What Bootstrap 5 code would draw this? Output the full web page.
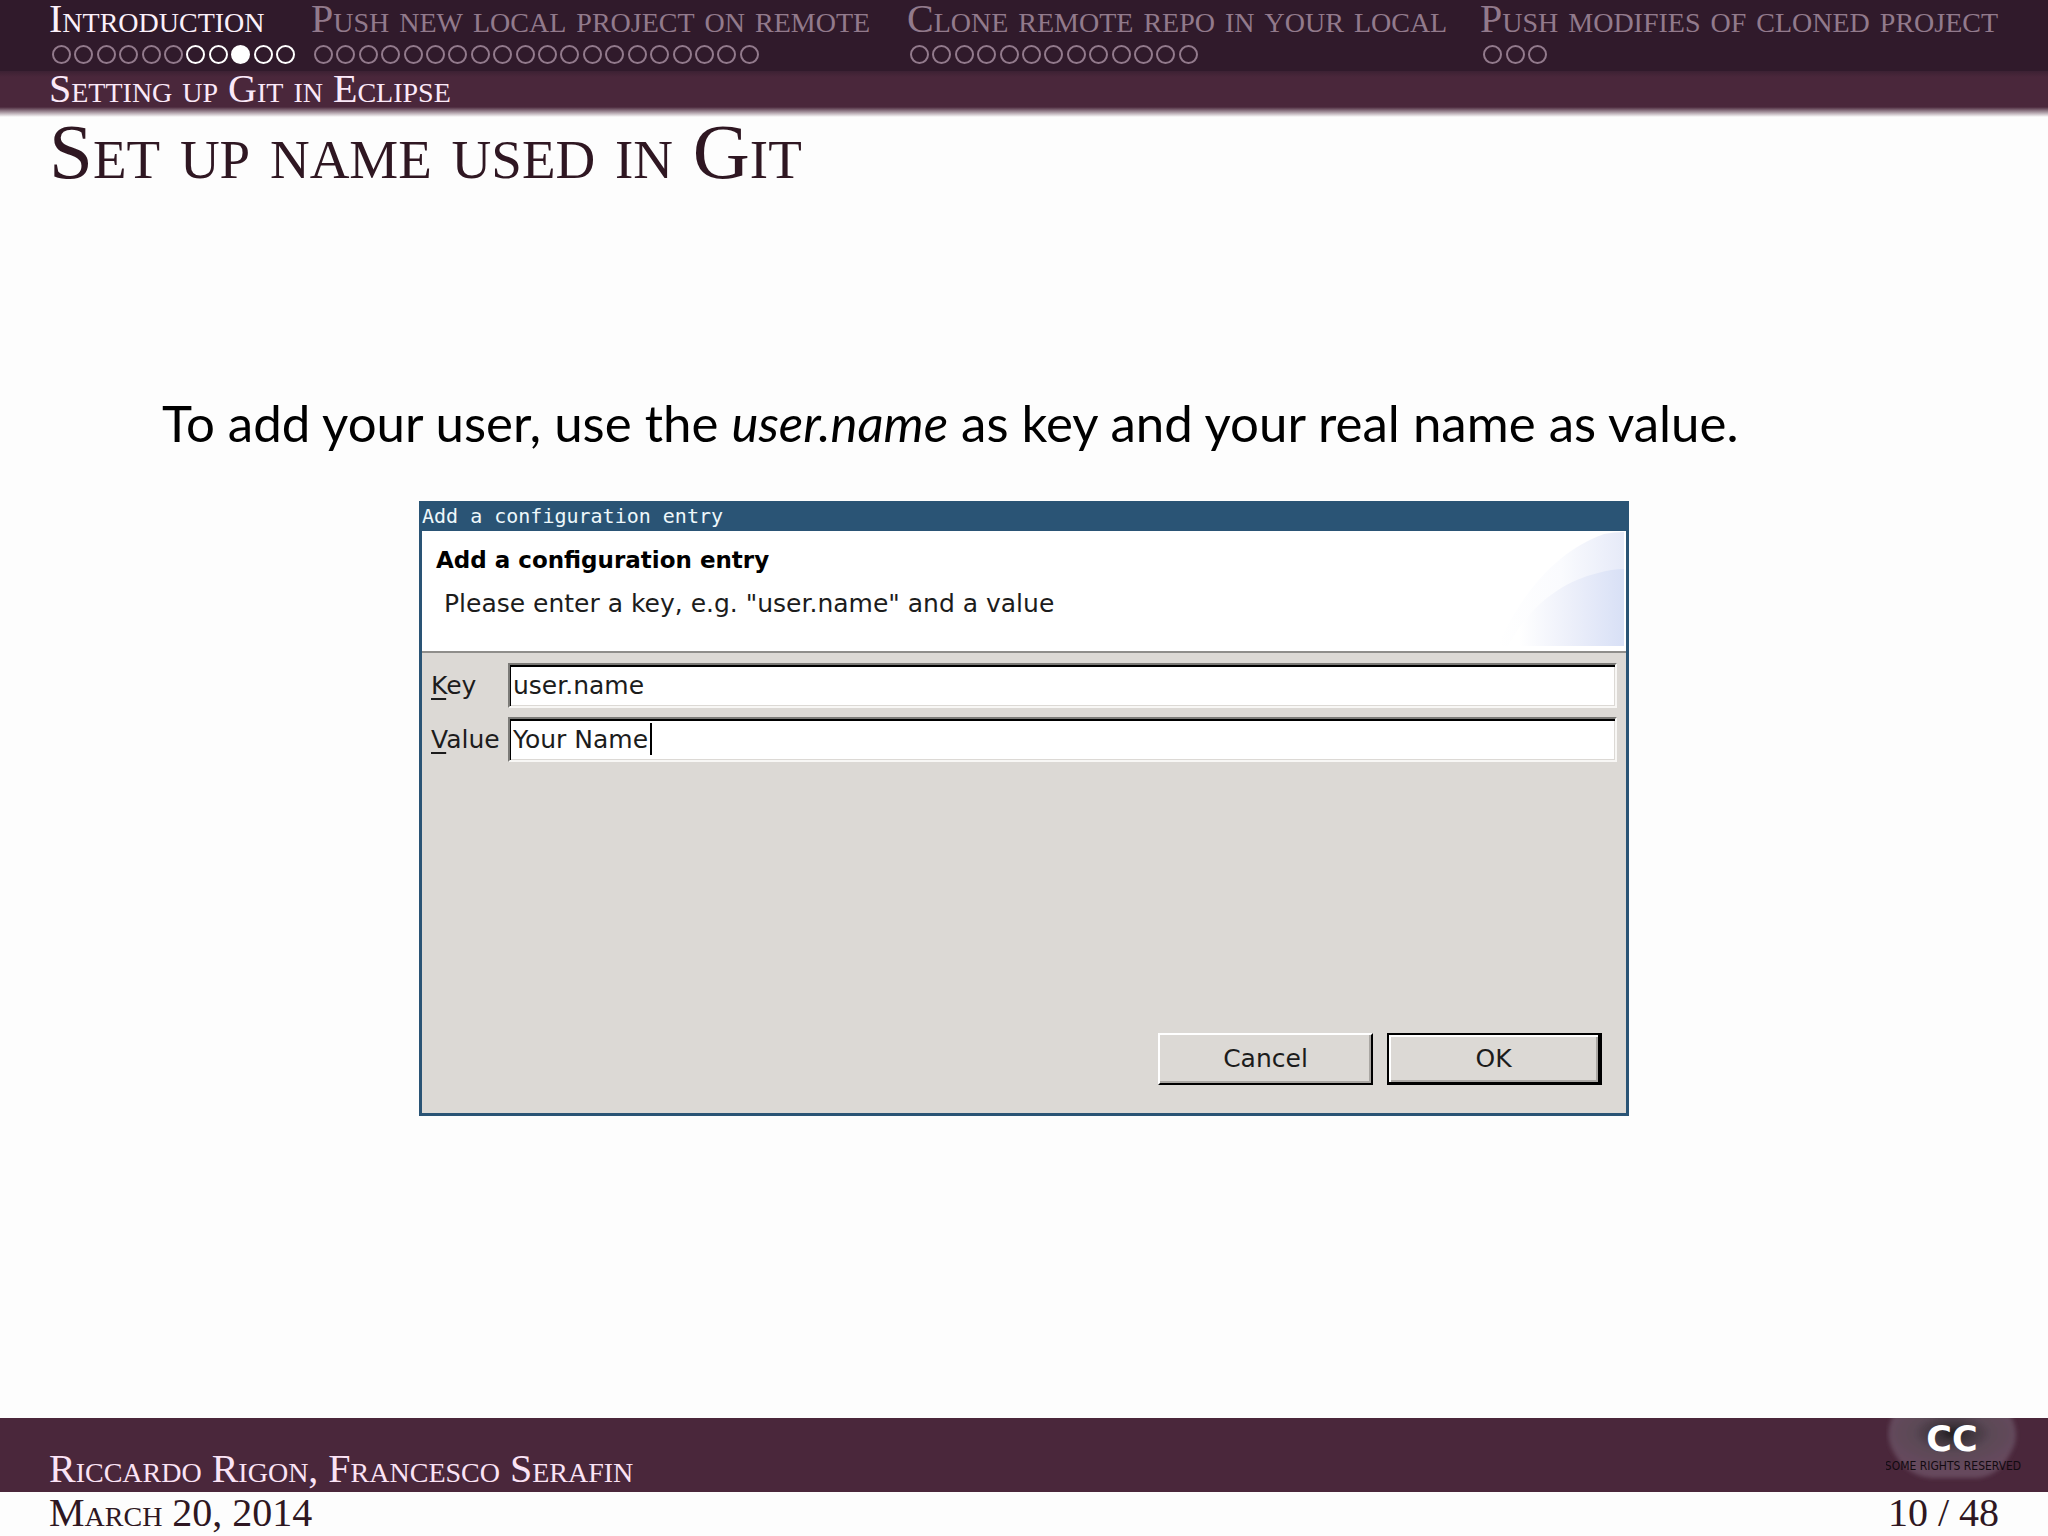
<!DOCTYPE html>
<html lang="en">
<head>
<meta charset="utf-8">
<meta name="viewport" content="width=device-width, initial-scale=1">
<title>Set up name used in Git</title>
<link href="https://cdn.jsdelivr.net/npm/bootstrap@5.3.0/dist/css/bootstrap.min.css" rel="stylesheet">
<style>
  body { background: #fdfdfd; color: #000; }
  .sc { font-family: "Liberation Serif", serif; font-variant: small-caps; font-size: 40px; line-height: 36px; white-space: nowrap; }
  .edge { padding-left: 49px; padding-right: 49px; }

  /* navigation header */
  .sections { background: #301a2b; height: 71px; line-height: 38px; display: grid; grid-template-columns: 262fr 596fr 573fr 519fr; }
  .sections a { color: #927a8c; text-decoration: none; }
  .sections a.current { color: #fbf0fa; }
  .dots { margin: 7px 0 0 3px; height: 19px; }
  .dots a { display: block; width: 19px; height: 19px; border: 2px solid #927a8c; border-radius: 50%; }
  .dots a.near { border-color: #fff; }
  .dots a.here { border-color: #fff; background: #fff; }
  .subsection { background: linear-gradient(#3c2133, #4a273b 6px); color: #fbe9f8; }
  .fade-edge { height: 10px; background: linear-gradient(#4a273b, #fdfdfd); }
  .frame-title { font-size: 79px; line-height: 70px; color: #2f1722; font-weight: 400; }

  /* slide body */
  .slide-body { padding-top: 206px; }
  .lead-line { font-family: Lato, sans-serif; font-size: 51px; line-height: 60px; padding-left: 162px; margin-bottom: 48px; }

  /* dialog */
  .dialog { width: 100%; max-width: 1210px; background: #dcd9d5; border: 3px solid #2a5475; border-top: 0; font-family: "DejaVu Sans", sans-serif; font-size: 25px; color: #1c1c1c; }
  .dialog-bar { background: #2a5475; color: #eef8fb; font-family: "DejaVu Sans Mono", monospace; font-size: 20px; line-height: 30px; }
  .dialog-head { background: #fff; padding: 14px 14px 30px; border-bottom: 2px solid #8f8e8b; }
  .dialog-head h2 { font-size: 23px; line-height: 30px; font-weight: 700; margin: 0 0 12px; color: #000; }
  .dialog-head p { line-height: 34px; margin: 0 8px; }
  .swoosh { position: absolute; right: 2px; top: 1px; width: 126px; height: 114px; }
  .fields { padding: 10px 9px 0; gap: 9px; margin-bottom: 271px; }
  .fields label { width: 77px; text-underline-offset: 4px; }
  .fields input { width: 100%; height: 45px; padding: 0 3px; border: 2px solid; border-color: #7b7a77 #f8f7f5 #f8f7f5 #7b7a77; border-radius: 0; background: #fff; color: #1c1c1c; box-shadow: inset 1px 2px #000, inset -1px -1px #dcd9d5; outline: 0; }
  .text-caret { position: absolute; left: 142px; top: 6px; width: 2px; height: 32px; background: #000; }
  .actions { gap: 14px; padding: 0 24px 28px; }
  .actions button { width: 215px; height: 52px; background: #dcd9d5; color: #1c1c1c; border: 2px solid; border-color: #fff #000 #000 #fff; box-shadow: inset -2px -2px #aaa7a3; padding: 0; }
  .actions button.default { border-color: #000; border-right-width: 4px; border-bottom-width: 3px; box-shadow: inset 2px 2px #fff, inset -2px -2px #aaa7a3; }

  /* footer */
  .authors { background: #4a273b; color: #fbe3f5; height: 74px; padding-top: 33px; }
  .dateline { color: #2f1722; line-height: 42px; padding-bottom: 2px; }
  .cc-mark { position: absolute; right: 26px; top: 0; width: 136px; height: 74px; }
</style>
<script src="https://cdn.jsdelivr.net/npm/bootstrap@5.3.0/dist/js/bootstrap.bundle.min.js"></script>
</head>
<body>
<div class="d-flex flex-column min-vh-100">
  <header>
    <nav class="sections sc edge" aria-label="Sections">
      <div><a class="current" href="#">Introduction</a><div class="dots d-flex justify-content-between" data-count="11" data-near="6" data-here="8"></div></div>
      <div><a href="#">Push new local project on remote</a><div class="dots d-flex justify-content-between" data-count="20"></div></div>
      <div><a href="#">Clone remote repo in your local</a><div class="dots d-flex justify-content-between" data-count="13"></div></div>
      <div><a href="#">Push modifies of cloned project</a><div class="dots d-flex justify-content-between" data-count="3"></div></div>
    </nav>
    <div class="subsection sc edge">Setting up Git in Eclipse</div>
    <div class="fade-edge"></div>
    <h1 class="frame-title sc edge m-0">Set up name used in Git</h1>
  </header>

  <main class="slide-body flex-grow-1">
    <p class="lead-line">To add your user, use the <em>user.name</em> as key and your real name as value.</p>
    <section class="dialog mx-auto" role="dialog" aria-labelledby="dlg-title">
      <div class="dialog-bar">Add a configuration entry</div>
      <div class="dialog-head position-relative">
        <h2 id="dlg-title">Add a configuration entry</h2>
        <p>Please enter a key, e.g. "user.name" and a value</p>
        <svg class="swoosh" viewBox="0 0 126 114" aria-hidden="true">
          <defs>
            <linearGradient id="outer"><stop offset="0" stop-color="#fff"/><stop offset=".5" stop-color="#fafbfe"/><stop offset="1" stop-color="#e6eaf8"/></linearGradient>
            <linearGradient id="inner"><stop offset=".1" stop-color="#fff"/><stop offset=".55" stop-color="#eceffa"/><stop offset="1" stop-color="#d8e0f6"/></linearGradient>
          </defs>
          <path d="M0 114C22 62 60 18 106 2Q116 0 126 0V114Z" fill="url(#outer)"/>
          <path d="M10 114C30 76 62 50 100 41Q114 37 126 37V114Z" fill="url(#inner)"/>
        </svg>
      </div>
      <form>
        <div class="fields d-flex flex-column">
          <div class="d-flex align-items-center">
            <label class="flex-shrink-0" for="key"><u>K</u>ey</label>
            <div class="flex-grow-1 d-flex"><input id="key" type="text" value="user.name"></div>
          </div>
          <div class="d-flex align-items-center">
            <label class="flex-shrink-0" for="value"><u>V</u>alue</label>
            <div class="flex-grow-1 d-flex position-relative"><input id="value" type="text" value="Your Name"><span class="text-caret"></span></div>
          </div>
        </div>
        <div class="actions d-flex justify-content-end">
          <button type="button">Cancel</button>
          <button type="button" class="default">OK</button>
        </div>
      </form>
    </section>
  </main>

  <footer>
    <div class="authors sc edge position-relative">Riccardo Rigon, Francesco Serafin
      <svg class="cc-mark" viewBox="0 0 136 74" role="img" aria-label="Creative Commons, some rights reserved">
        <defs><radialGradient id="glow" cx=".5" cy=".3" r=".55"><stop offset="0" stop-color="#1e1a1d"/><stop offset=".2" stop-color="#3a3238"/><stop offset=".55" stop-color="#5b4856"/><stop offset="1" stop-color="#664a5d"/></radialGradient>
        <filter id="soft" x="-10%" y="-10%" width="120%" height="120%"><feGaussianBlur stdDeviation="2"/></filter></defs>
        <path d="M8 -4H124Q136 18 124 36Q112 60 88 60H46Q22 58 10 38Q-4 18 8 -4Z" fill="url(#glow)" filter="url(#soft)"/>
        <text x="66" y="33" text-anchor="middle" font-family="DejaVu Sans, sans-serif" font-variant="normal" font-weight="700" font-size="35" fill="#fff">CC</text>
        <text x="67" y="52" text-anchor="middle" font-family="DejaVu Sans Condensed, DejaVu Sans, sans-serif" font-variant="normal" font-size="12" fill="#120a10">SOME RIGHTS RESERVED</text>
      </svg>
    </div>
    <div class="dateline sc edge d-flex justify-content-between"><span>March 20, 2014</span><span>10 / 48</span></div>
  </footer>
</div>
<script>
  // One dot per slide; the slides of the current subsection are lit.
  document.querySelectorAll('.dots').forEach(row => {
    const { count, near, here } = row.dataset;
    row.style.width = Math.round(count * 22.4 - 3) + 'px';
    for (let i = 0; i < count; i++) {
      const dot = document.createElement('a');
      dot.href = '#';
      dot.setAttribute('aria-label', 'Slide ' + (i + 1));
      if (near && i >= near) dot.className = i == here ? 'here' : 'near';
      row.append(dot);
    }
  });
</script>
</body>
</html>
